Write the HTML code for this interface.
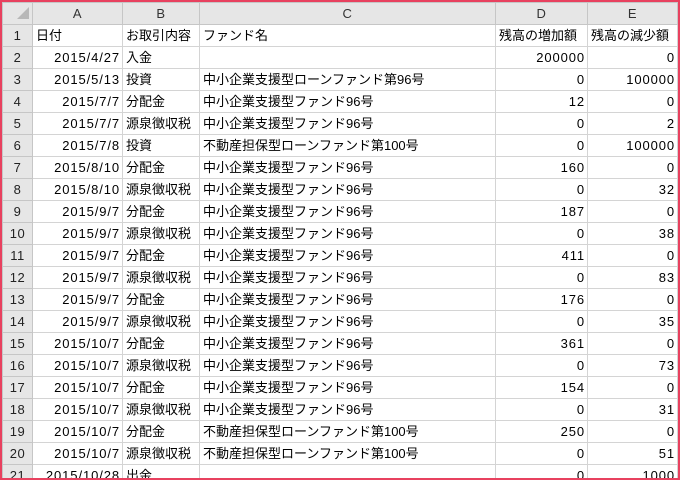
<!DOCTYPE html>
<html><head><meta charset="utf-8"><style>
body{margin:0;width:680px;height:480px;overflow:hidden;background:#fff;font-family:"Liberation Sans","Noto Sans CJK JP",sans-serif;font-size:13px;color:#000}
.wrap{position:absolute;left:0;top:0;width:680px;height:480px;overflow:hidden}
table{position:absolute;left:2px;top:2px;border-collapse:collapse;table-layout:fixed}
td{height:21px;border:1px solid #d4d4d4;padding:0 3px;white-space:nowrap;overflow:hidden;line-height:21px;vertical-align:middle}
tr.h td{background:#e6e6e6;text-align:center;color:#333;border-color:#c6c6c6;height:20px;letter-spacing:0.5px}
td.n{background:#e6e6e6;text-align:center;color:#222;border-color:#c6c6c6;letter-spacing:0.5px}
.r{text-align:right;letter-spacing:0.9px;padding-right:2px}
.frame{position:absolute;left:0;top:0;width:676px;height:476px;border:2px solid #e8415f;pointer-events:none}
.tri{position:absolute;left:17px;top:7px;width:0;height:0;border-left:12px solid transparent;border-bottom:12px solid #b8b8b8}
</style></head><body><div class="wrap">
<table>
<colgroup><col style="width:30px"><col style="width:90px"><col style="width:77px"><col style="width:296px"><col style="width:92px"><col style="width:90px"></colgroup>
<tr class="h"><td></td><td>A</td><td>B</td><td>C</td><td>D</td><td>E</td></tr>
<tr><td class="n">1</td><td>日付</td><td>お取引内容</td><td>ファンド名</td><td>残高の増加額</td><td>残高の減少額</td></tr>
<tr><td class="n">2</td><td class="r">2015/4/27</td><td>入金</td><td></td><td class="r">200000</td><td class="r">0</td></tr>
<tr><td class="n">3</td><td class="r">2015/5/13</td><td>投資</td><td>中小企業支援型ローンファンド第96号</td><td class="r">0</td><td class="r">100000</td></tr>
<tr><td class="n">4</td><td class="r">2015/7/7</td><td>分配金</td><td>中小企業支援型ファンド96号</td><td class="r">12</td><td class="r">0</td></tr>
<tr><td class="n">5</td><td class="r">2015/7/7</td><td>源泉徴収税</td><td>中小企業支援型ファンド96号</td><td class="r">0</td><td class="r">2</td></tr>
<tr><td class="n">6</td><td class="r">2015/7/8</td><td>投資</td><td>不動産担保型ローンファンド第100号</td><td class="r">0</td><td class="r">100000</td></tr>
<tr><td class="n">7</td><td class="r">2015/8/10</td><td>分配金</td><td>中小企業支援型ファンド96号</td><td class="r">160</td><td class="r">0</td></tr>
<tr><td class="n">8</td><td class="r">2015/8/10</td><td>源泉徴収税</td><td>中小企業支援型ファンド96号</td><td class="r">0</td><td class="r">32</td></tr>
<tr><td class="n">9</td><td class="r">2015/9/7</td><td>分配金</td><td>中小企業支援型ファンド96号</td><td class="r">187</td><td class="r">0</td></tr>
<tr><td class="n">10</td><td class="r">2015/9/7</td><td>源泉徴収税</td><td>中小企業支援型ファンド96号</td><td class="r">0</td><td class="r">38</td></tr>
<tr><td class="n">11</td><td class="r">2015/9/7</td><td>分配金</td><td>中小企業支援型ファンド96号</td><td class="r">411</td><td class="r">0</td></tr>
<tr><td class="n">12</td><td class="r">2015/9/7</td><td>源泉徴収税</td><td>中小企業支援型ファンド96号</td><td class="r">0</td><td class="r">83</td></tr>
<tr><td class="n">13</td><td class="r">2015/9/7</td><td>分配金</td><td>中小企業支援型ファンド96号</td><td class="r">176</td><td class="r">0</td></tr>
<tr><td class="n">14</td><td class="r">2015/9/7</td><td>源泉徴収税</td><td>中小企業支援型ファンド96号</td><td class="r">0</td><td class="r">35</td></tr>
<tr><td class="n">15</td><td class="r">2015/10/7</td><td>分配金</td><td>中小企業支援型ファンド96号</td><td class="r">361</td><td class="r">0</td></tr>
<tr><td class="n">16</td><td class="r">2015/10/7</td><td>源泉徴収税</td><td>中小企業支援型ファンド96号</td><td class="r">0</td><td class="r">73</td></tr>
<tr><td class="n">17</td><td class="r">2015/10/7</td><td>分配金</td><td>中小企業支援型ファンド96号</td><td class="r">154</td><td class="r">0</td></tr>
<tr><td class="n">18</td><td class="r">2015/10/7</td><td>源泉徴収税</td><td>中小企業支援型ファンド96号</td><td class="r">0</td><td class="r">31</td></tr>
<tr><td class="n">19</td><td class="r">2015/10/7</td><td>分配金</td><td>不動産担保型ローンファンド第100号</td><td class="r">250</td><td class="r">0</td></tr>
<tr><td class="n">20</td><td class="r">2015/10/7</td><td>源泉徴収税</td><td>不動産担保型ローンファンド第100号</td><td class="r">0</td><td class="r">51</td></tr>
<tr><td class="n">21</td><td class="r">2015/10/28</td><td>出金</td><td></td><td class="r">0</td><td class="r">1000</td></tr>
</table>
<div class="tri"></div>
<div class="frame"></div>
</div></body></html>
